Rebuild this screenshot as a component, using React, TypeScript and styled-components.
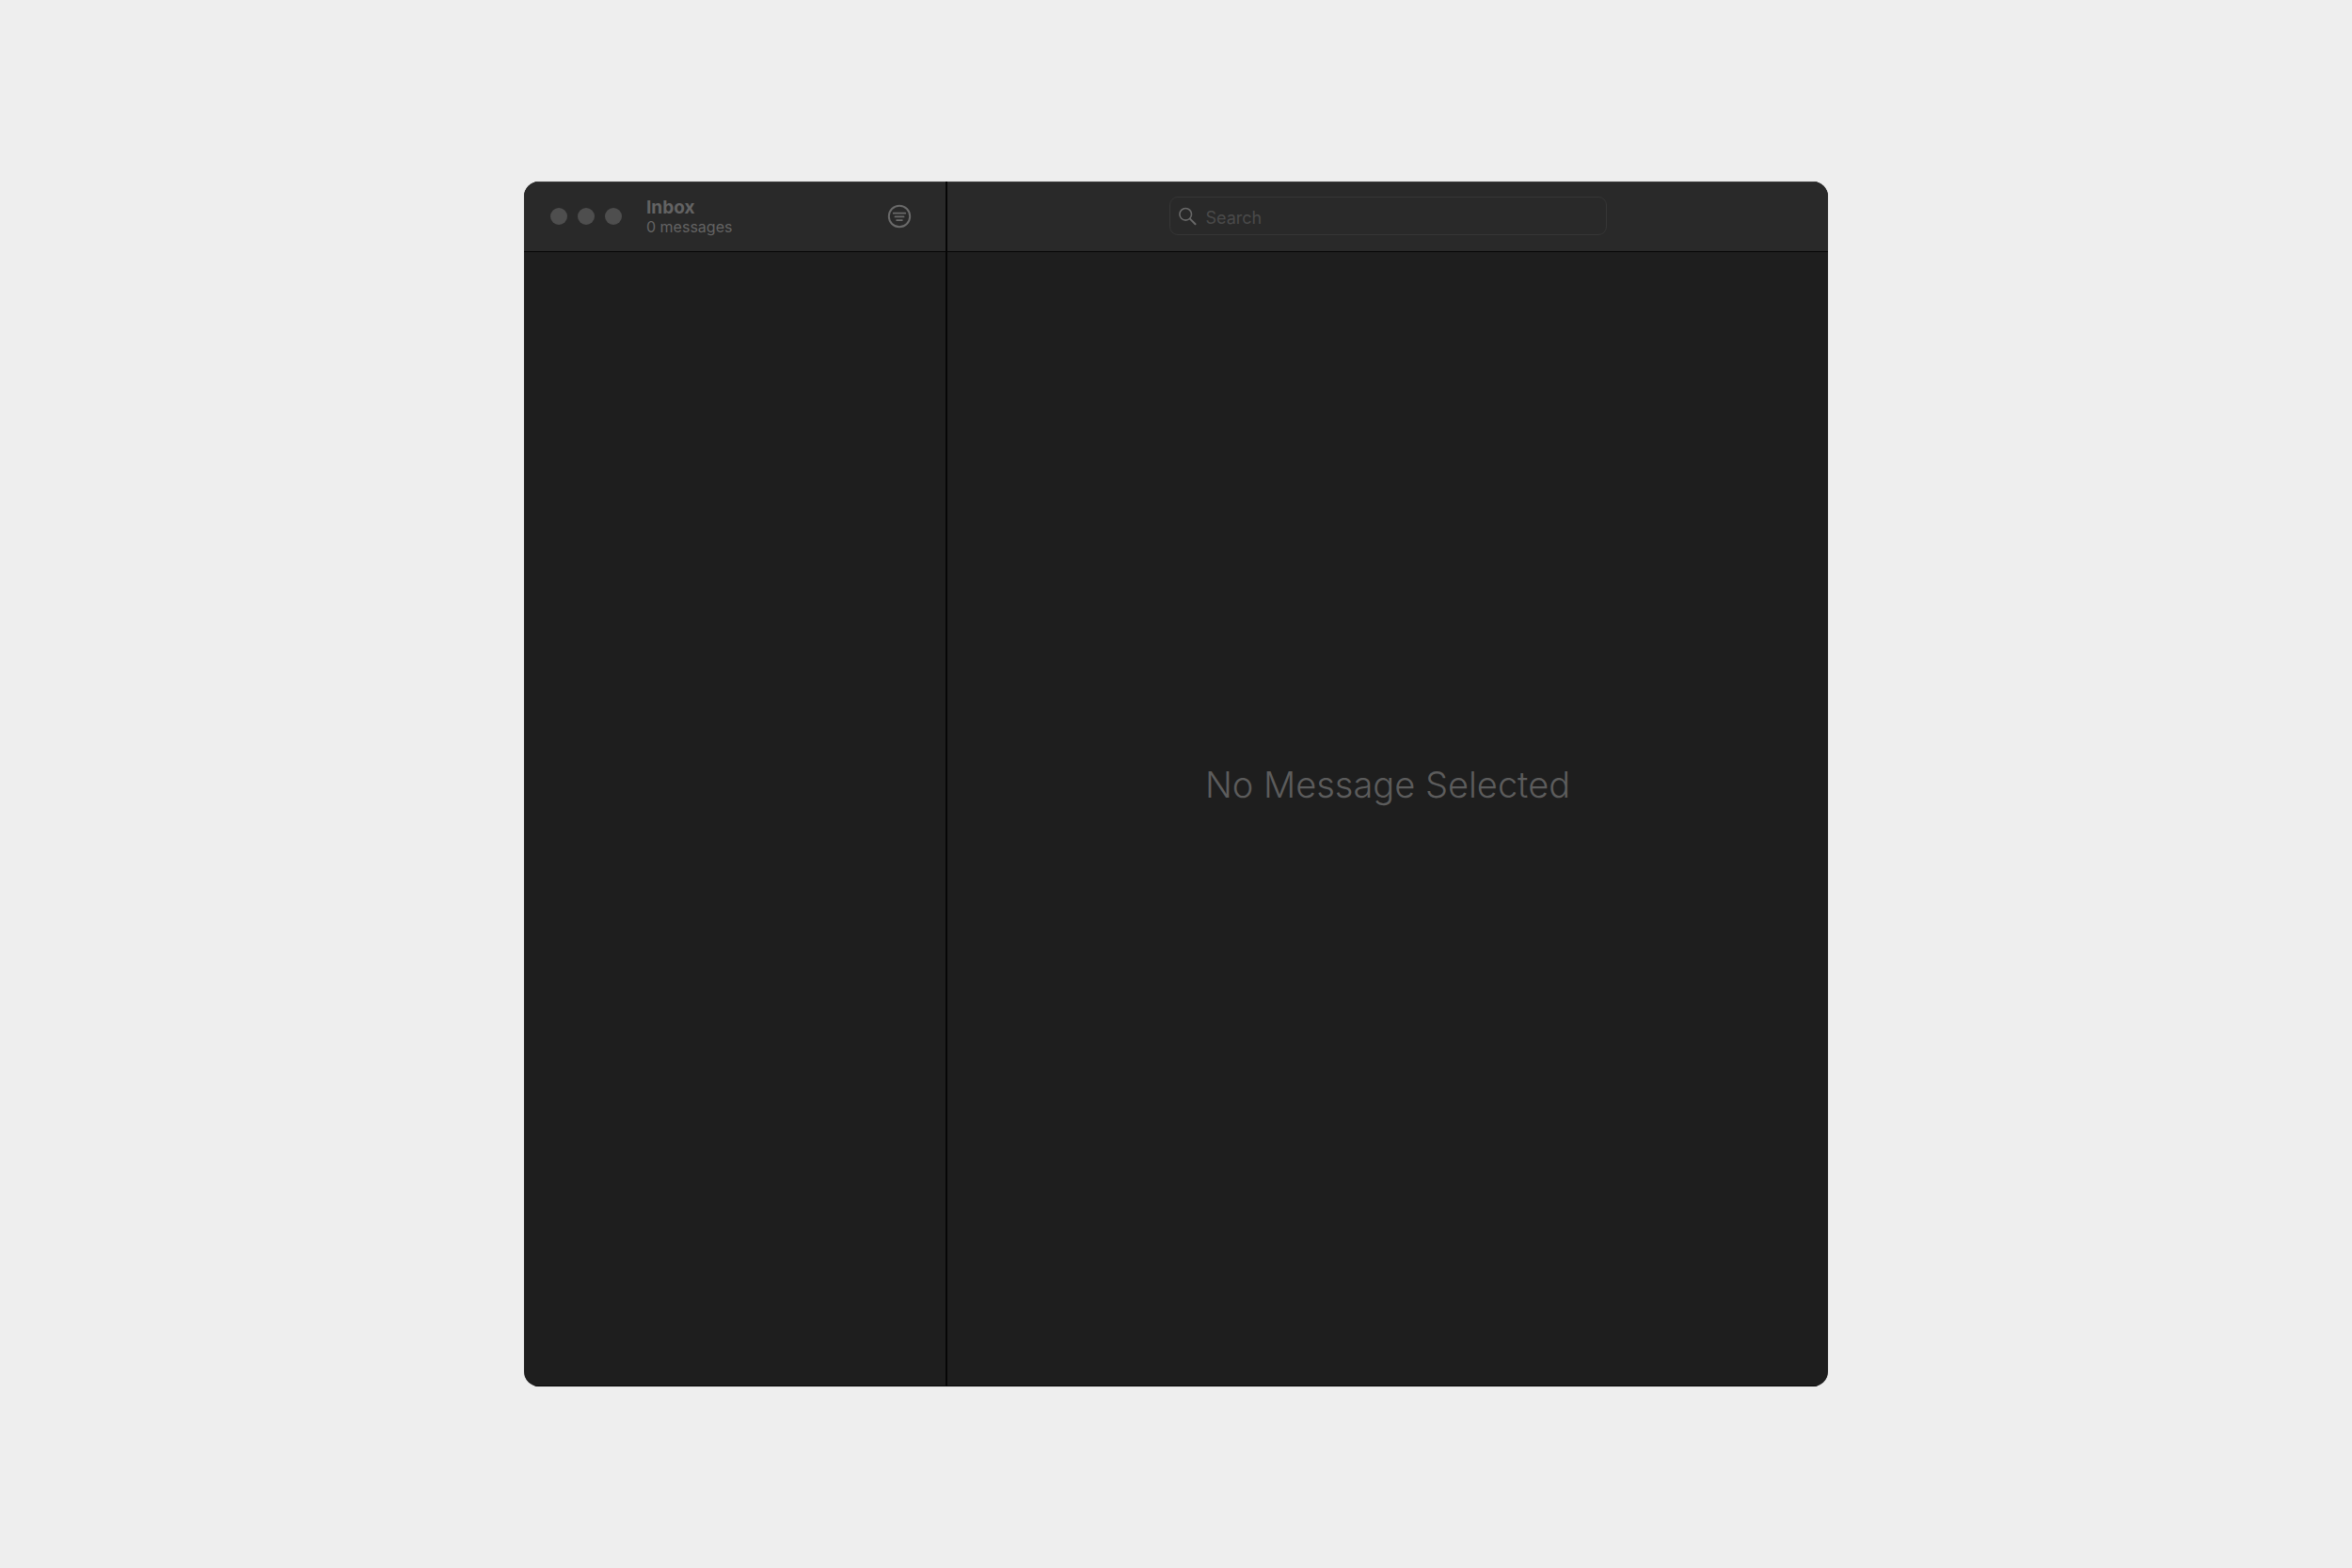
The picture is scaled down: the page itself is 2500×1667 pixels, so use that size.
import React from "react";
import styled, { createGlobalStyle } from "styled-components";

const GlobalStyle = createGlobalStyle`
  *, *::before, *::after { box-sizing: border-box; }
  body {
    margin: 0;
    background: #eeeeee;
    font-family: Inter, "Liberation Sans", sans-serif;
  }
`;

const Page = styled.main`
  display: flex;
  justify-content: center;
  min-height: 100vh;
  padding: 193px 24px;
`;

const Window = styled.div`
  display: grid;
  grid-template-columns: 450px minmax(0, 1fr);
  width: 100%;
  max-width: 1386px;
  border-radius: 16px;
  overflow: hidden;
  background: #1e1e1e;
  box-shadow: 0 0 1px #00000066;
`;

const Pane = styled.section<{ $divided?: boolean }>`
  display: flex;
  flex-direction: column;
  min-width: 0;
  border-right: ${({ $divided }) => ($divided ? "2px solid #060606" : "none")};
  border-bottom: 1px solid #0a0a0a;
`;

const Toolbar = styled.header<{ $centered?: boolean }>`
  display: flex;
  align-items: center;
  justify-content: ${({ $centered }) => ($centered ? "center" : "flex-start")};
  height: 75px;
  flex: none;
  padding: 0 28px 2px;
  background: #292929;
  border-top: 1px solid #3a3a3a;
  border-bottom: 1px solid #060606;
`;

const WindowControls = styled.div`
  display: flex;
  gap: 11px;
`;

const Dot = styled.button`
  width: 18px;
  height: 18px;
  padding: 0;
  border: 0;
  border-radius: 50%;
  background: #4e4e4e;
`;

const Heading = styled.div`
  flex: 1;
  margin-left: 26px;
  padding-top: 2px;
`;

const Title = styled.h1`
  margin: 0;
  font-size: 19px;
  line-height: 20px;
  font-weight: 700;
  color: #636363;
`;

const Count = styled.p`
  margin: 0;
  font-size: 16px;
  line-height: 20px;
  color: #636363;
`;

const IconButton = styled.button`
  display: flex;
  padding: 4px 8px;
  border: 0;
  background: none;
  color: #6a6a6a;
`;

const SearchField = styled.label`
  display: flex;
  align-items: center;
  gap: 10px;
  width: 465px;
  height: 41px;
  padding: 0 8px;
  border: 1px solid #363636;
  border-radius: 9px;
  color: #686868;
`;

const SearchInput = styled.input`
  flex: 1;
  min-width: 0;
  padding: 5px 0 0;
  border: 0;
  outline: 0;
  background: none;
  font: inherit;
  font-size: 18px;
  line-height: 24px;
  color: #8a8a8a;

  &::placeholder {
    color: #4a4a4a;
    opacity: 1;
  }
`;

const EmptyState = styled.div`
  display: flex;
  flex: 1;
  align-items: center;
  justify-content: center;
  padding-bottom: 74px;
  font-size: 38px;
  line-height: 48px;
  font-weight: 350;
  color: #5c5c5c;
`;

const FilterIcon = () => (
  <svg width="26" height="26" viewBox="0 0 26 26" fill="none" stroke="currentColor" strokeLinecap="round" aria-hidden="true">
    <circle cx="13" cy="13" r="11.2" strokeWidth="2" />
    <path d="M6.7 9.7h12.6M8.4 13.4h9.2M10.1 17.1h5.8" strokeWidth="1.7" />
  </svg>
);

const SearchIcon = () => (
  <svg width="20" height="20" viewBox="0 0 20 20" fill="none" stroke="currentColor" strokeLinecap="round" aria-hidden="true">
    <circle cx="8.2" cy="7.8" r="6.3" strokeWidth="1.6" />
    <path d="M12.9 12.6l5.6 5.6" strokeWidth="2" />
  </svg>
);

export default function App() {
  return (
    <>
      <GlobalStyle />
      <Page>
        <Window>
          <Pane $divided>
            <Toolbar>
              <WindowControls>
                <Dot aria-label="Close" />
                <Dot aria-label="Minimize" />
                <Dot aria-label="Zoom" />
              </WindowControls>
              <Heading>
                <Title>Inbox</Title>
                <Count>0 messages</Count>
              </Heading>
              <IconButton aria-label="Filter messages">
                <FilterIcon />
              </IconButton>
            </Toolbar>
          </Pane>
          <Pane>
            <Toolbar $centered>
              <SearchField>
                <SearchIcon />
                <SearchInput type="text" placeholder="Search" aria-label="Search" />
              </SearchField>
            </Toolbar>
            <EmptyState>No Message Selected</EmptyState>
          </Pane>
        </Window>
      </Page>
    </>
  );
}
